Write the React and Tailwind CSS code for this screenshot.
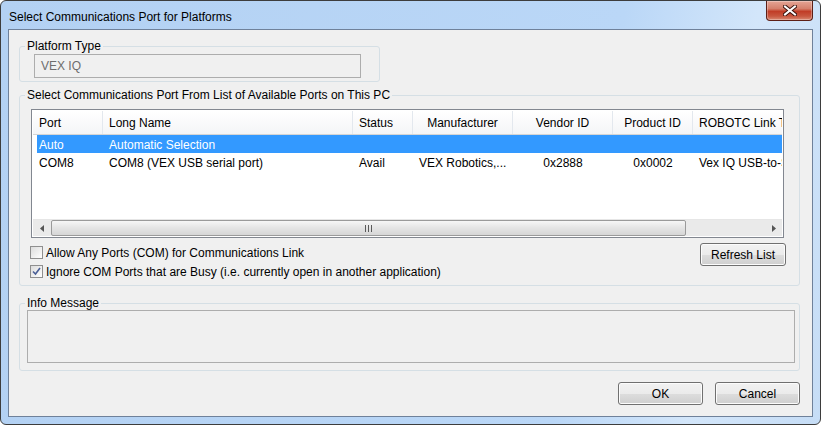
import React from "react";

const FONT = "font-['Liberation_Sans',Arial,sans-serif]";

// column layout for the list view: width, alignment of data
const columns = [
  { key: "port", title: "Port", width: "w-[70px]", align: "left" },
  { key: "name", title: "Long Name", width: "w-[250px]", align: "left" },
  { key: "status", title: "Status", width: "w-[60px]", align: "left" },
  { key: "maker", title: "Manufacturer", width: "w-[100px]", align: "center", dataAlign: "left" },
  { key: "vendor", title: "Vendor ID", width: "w-[100px]", align: "center" },
  { key: "product", title: "Product ID", width: "w-[80px]", align: "center" },
  { key: "link", title: "ROBOTC Link Type", width: "w-[200px]", align: "left" },
];

const rows = [
  { port: "Auto", name: "Automatic Selection", status: "", maker: "", vendor: "", product: "", link: "", selected: true },
  {
    port: "COM8",
    name: "COM8 (VEX USB serial port)",
    status: "Avail",
    maker: "VEX Robotics,...",
    vendor: "0x2888",
    product: "0x0002",
    link: "Vex IQ USB-to-Serial",
  },
];

function CloseButton() {
  return (
    <div className="w-[47px] h-[20px] rounded-b-[4px] border border-t-0 border-[#5c1f16] bg-[linear-gradient(to_bottom,#e5a595_0%,#d5806c_40%,#c13d27_55%,#c8573f_80%,#d98a73_100%)] flex items-center justify-center shadow-[inset_0_0_0_1px_rgba(255,255,255,0.3)]">
      <svg width="14" height="11" viewBox="0 0 14 11">
        <path d="M2 1.5 L12 9.5 M12 1.5 L2 9.5" stroke="#3a120c" strokeWidth="4" strokeLinecap="square" />
        <path d="M2 1.5 L12 9.5 M12 1.5 L2 9.5" stroke="#ffffff" strokeWidth="2" strokeLinecap="square" />
      </svg>
    </div>
  );
}

function WinButton({ children, className }) {
  return (
    <button
      className={`h-[23px] rounded-[3px] border border-[#707070] bg-[linear-gradient(to_bottom,#f2f2f2_0%,#ebebeb_50%,#dddddd_51%,#cfcfcf_100%)] shadow-[inset_0_0_0_1px_#fcfcfc] text-[12px] leading-[14px] text-black ${className}`}
    >
      {children}
    </button>
  );
}

function Checkbox({ checked, label }) {
  return (
    <div className="h-[19px] flex items-center">
      <div className="w-[13px] h-[13px] border border-[#8f8f8f] bg-[linear-gradient(135deg,#dcdcdc,#ffffff)] flex items-center justify-center">
        {checked && (
          <svg width="9" height="9" viewBox="0 0 9 9">
            <path d="M1 4.5 L3.5 7 L8 1" fill="none" stroke="#4a5f97" strokeWidth="1.6" />
          </svg>
        )}
      </div>
      <span className="ml-[3px] text-[12px] leading-[14px] text-black">{label}</span>
    </div>
  );
}

function GroupBox({ label, className, children }) {
  return (
    <fieldset className={`border border-[#d5dfe5] rounded-[3px] ${className}`}>
      <legend className="ml-[5px] px-[2px] text-[12px] leading-[14px] text-black">{label}</legend>
      {children}
    </fieldset>
  );
}

function ListView() {
  return (
    <div className="w-[753px] h-[129px] border border-[#828790] bg-white p-[1px] flex flex-col">
      <div className="flex-1 overflow-hidden flex flex-col">
        {/* header */}
        <div className="h-[24px] flex border-b border-[#d5d5d5] bg-[linear-gradient(to_bottom,#ffffff,#f4f5f7)] shrink-0">
          {columns.map((c) => (
            <div
              key={c.key}
              className={`${c.width} shrink-0 h-full flex items-center border-r border-[#e3e8ee] px-[6px] text-[12px] leading-[14px] text-black whitespace-nowrap ${
                c.align === "center" ? "justify-center" : ""
              }`}
            >
              {c.title}
            </div>
          ))}
        </div>
        {/* rows */}
        <div className="flex-1">
          {rows.map((r, i) => (
            <div
              key={i}
              className={`h-[18px] ml-[4px] flex items-start pt-[3px] whitespace-nowrap ${
                r.selected ? "bg-[#3399ff] text-white" : "text-black"
              }`}
            >
              {columns.map((c, j) => {
                const align = c.dataAlign || c.align;
                return (
                  <div
                    key={c.key}
                    className={`${j === 0 ? "w-[66px] pl-[2px]" : `${c.width} pl-[6px]`} shrink-0 text-[12px] leading-[14px] overflow-hidden ${
                      align === "center" ? "text-center pr-[6px]" : ""
                    }`}
                  >
                    {r[c.key]}
                  </div>
                );
              })}
            </div>
          ))}
        </div>
        {/* horizontal scrollbar */}
        <div className="h-[17px] shrink-0 flex bg-[#eaeaea] border-t border-[#e6e6e6]">
          <div className="w-[18px] flex items-center justify-center">
            <svg width="4" height="7" viewBox="0 0 4 7">
              <path d="M4 0 L0 3.5 L4 7 Z" fill="#555" />
            </svg>
          </div>
          <div className="w-[635px] rounded-[2px] border border-[#9a9a9a] bg-[linear-gradient(to_bottom,#f6f6f6,#e4e4e4_50%,#d6d6d6)] flex items-center justify-center">
            <div className="flex gap-[2px]">
              <div className="w-[1px] h-[7px] bg-[#5a5a5a]" />
              <div className="w-[1px] h-[7px] bg-[#5a5a5a]" />
              <div className="w-[1px] h-[7px] bg-[#5a5a5a]" />
            </div>
          </div>
          <div className="flex-1" />
          <div className="w-[17px] flex items-center justify-center">
            <svg width="4" height="7" viewBox="0 0 4 7">
              <path d="M0 0 L4 3.5 L0 7 Z" fill="#555" />
            </svg>
          </div>
        </div>
      </div>
    </div>
  );
}

export default function App() {
  return (
    <div className={`w-[821px] h-[425px] bg-white ${FONT}`}>
      <div className="w-full h-full rounded-[6px] border border-[#3d3d3d] bg-[linear-gradient(100deg,#b3d1f3_0%,#bad7f7_70%,#d3e6fa_85%,#c6ddf6_100%)] px-[7px] pb-[7px] flex flex-col">
        {/* title bar */}
        <div className="h-[28px] flex justify-between shrink-0">
          <div className="ml-[1px] mt-[8px] text-[12px] leading-[16px] text-black">
            Select Communications Port for Platforms
          </div>
          <CloseButton />
        </div>

        {/* client area */}
        <div className="flex-1 border border-[#6f819a] bg-[#f0f0f0] px-[10px] flex flex-col">
          <GroupBox label="Platform Type" className="mt-[9px] w-[361px] pt-[1px] pb-[3px]">
            <div className="pl-[14px]">
              <div className="w-[327px] h-[24px] border border-[#adadad] bg-[#f0f0f0] px-[6px] flex items-center text-[12px] leading-[14px] text-[#6d6d6d]">
                VEX IQ
              </div>
            </div>
          </GroupBox>

          <GroupBox
            label="Select Communications Port From List of Available Ports on This PC"
            className="mt-[6px] w-[781px] pt-[7px] pb-[4px]"
          >
            <div className="ml-[11px]">
              <ListView />
            </div>
            <div className="flex justify-between pl-[10px] pr-[13px]">
              <div className="mt-[5px]">
                <Checkbox label="Allow Any Ports (COM) for Communications Link" />
                <Checkbox checked label="Ignore COM Ports that are Busy (i.e. currently open in another application)" />
              </div>
              <WinButton className="mt-[5px] w-[86px]">Refresh List</WinButton>
            </div>
          </GroupBox>

          <GroupBox label="Info Message" className="mt-[10px] w-[781px] pb-[7px]">
            <div className="pl-[7px]">
              <div className="w-[768px] h-[53px] border border-[#adadad] bg-[#f0f0f0]" />
            </div>
          </GroupBox>

          <div className="mt-[11px] flex justify-end gap-[12px] pr-[2px]">
            <WinButton className="w-[85px]">OK</WinButton>
            <WinButton className="w-[85px]">Cancel</WinButton>
          </div>
        </div>
      </div>
    </div>
  );
}
